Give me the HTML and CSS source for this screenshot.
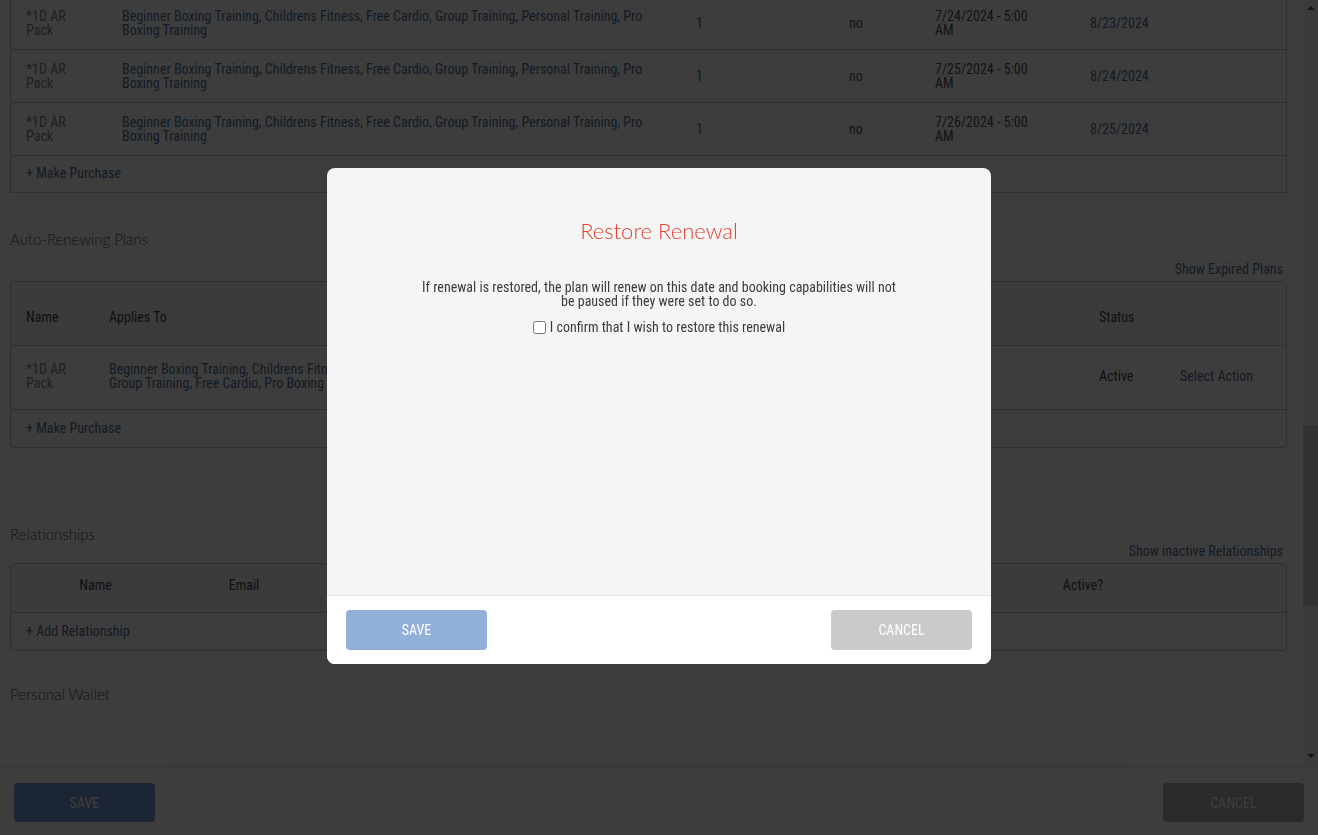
FILE: index.html
```html
<!DOCTYPE html>
<html lang="en">
<head>
<meta charset="utf-8">
<title>Member Plans</title>
<link rel="stylesheet" href="styles.css">
</head>
<body>
<div class="main">
  <div class="scroll">
    <div class="content">
      <div class="tbl tbl-plans">
        <div class="row plans-row">
          <div class="c-name">*1D AR Pack</div>
          <div class="c-apps">Beginner Boxing Training, Childrens Fitness, Free Cardio, Group Training, Personal Training, Pro Boxing Training</div>
          <div class="c-qty">1</div>
          <div class="c-no">no</div>
          <div class="c-date">7/24/2024 - 5:00 AM</div>
          <div class="c-exp">8/23/2024</div>
        </div>
        <div class="row plans-row">
          <div class="c-name">*1D AR Pack</div>
          <div class="c-apps">Beginner Boxing Training, Childrens Fitness, Free Cardio, Group Training, Personal Training, Pro Boxing Training</div>
          <div class="c-qty">1</div>
          <div class="c-no">no</div>
          <div class="c-date">7/25/2024 - 5:00 AM</div>
          <div class="c-exp">8/24/2024</div>
        </div>
        <div class="row plans-row">
          <div class="c-name">*1D AR Pack</div>
          <div class="c-apps">Beginner Boxing Training, Childrens Fitness, Free Cardio, Group Training, Personal Training, Pro Boxing Training</div>
          <div class="c-qty">1</div>
          <div class="c-no">no</div>
          <div class="c-date">7/26/2024 - 5:00 AM</div>
          <div class="c-exp">8/25/2024</div>
        </div>
        <div class="row add-row add-plans"><span class="link">+ Make Purchase</span></div>
      </div>

      <h3 class="sec-title sec-auto">Auto-Renewing Plans</h3>
      <div class="sec-link link-expired"><span class="link">Show Expired Plans</span></div>
      <div class="tbl tbl-ar">
        <div class="row ar-row ar-head">
          <div>Name</div>
          <div>Applies To</div>
          <div>Status</div>
          <div></div>
        </div>
        <div class="row ar-row ar-body">
          <div class="c-name">*1D AR Pack</div>
          <div class="c-apps ar-apps">Beginner Boxing Training, Childrens Fitness, Personal Training, Group Training, Free Cardio, Pro Boxing Training</div>
          <div class="c-status">Active</div>
          <div class="link">Select Action</div>
        </div>
        <div class="row add-row add-ar"><span class="link">+ Make Purchase</span></div>
      </div>

      <h3 class="sec-title sec-rel">Relationships</h3>
      <div class="sec-link link-rel"><span class="link">Show inactive Relationships</span></div>
      <div class="tbl tbl-rel">
        <div class="rel-head">
          <div>Name</div>
          <div>Email</div>
          <div></div>
          <div>Active?</div>
          <div></div>
        </div>
        <div class="row add-row add-rel"><span class="link">+ Add Relationship</span></div>
      </div>

      <h3 class="sec-title sec-wallet">Personal Wallet</h3>
      <div class="wallet-box"></div>
    </div>
    <div class="scrollbar">
      <div class="sb-btn"><span class="arrow-up"></span></div>
      <div class="sb-track"><div class="sb-thumb"></div></div>
      <div class="sb-btn sb-btn-bottom"><span class="arrow-down"></span></div>
    </div>
  </div>
  <div class="footer-bar">
    <button class="fbtn fbtn-save">SAVE</button>
    <button class="fbtn fbtn-cancel">CANCEL</button>
  </div>
</div>

<div class="overlay">
  <div class="modal">
    <div class="modal-body">
      <h2 class="modal-title">Restore Renewal</h2>
      <p class="modal-text">If renewal is restored, the plan will renew on this date and booking capabilities will not be paused if they were set to do so.</p>
      <label class="confirm"><input type="checkbox"> I confirm that I wish to restore this renewal</label>
    </div>
    <div class="modal-footer">
      <button class="mbtn mbtn-save">SAVE</button>
      <button class="mbtn mbtn-cancel">CANCEL</button>
    </div>
  </div>
</div>
</body>
</html>
```

FILE: styles.css
```css
* { box-sizing: border-box; }
html, body { margin: 0; height: 100%; }
body {
  font-family: "Liberation Sans Narrow", "Roboto Condensed", Roboto, sans-serif;
  font-size: 14px;
  line-height: 14px;
  color: #555;
  background: #fff;
  overflow: hidden;
}

.main { height: 835px; display: flex; flex-direction: column; }
.scroll { height: 767px; display: flex; overflow: hidden; }
.content { flex: 1; padding: 0 16px 0 10px; overflow: hidden; }

.link { color: #52719c; }

/* scrollbar */
.scrollbar { width: 15px; display: flex; flex-direction: column; background: #f3f3f3; }
.sb-btn { height: 15px; display: flex; align-items: center; justify-content: center; }
.sb-btn-bottom { margin-bottom: 4px; }
.sb-track { flex: 1; }
.sb-thumb { margin-top: 410px; height: 181px; background: #d2d2d2; }
.arrow-up { width: 0; height: 0; border-left: 4px solid transparent; border-right: 4px solid transparent; border-bottom: 4px solid #505050; }
.arrow-down { width: 0; height: 0; border-left: 4px solid transparent; border-right: 4px solid transparent; border-top: 4px solid #505050; }

/* tables */
.tbl { border: 1px solid #c6c6c6; border-radius: 4px; }
.row { display: grid; align-items: center; border-bottom: 1px solid #c6c6c6; padding-left: 15px; }
.row:last-child { border-bottom: none; }

.tbl-plans { margin-top: -4px; border-radius: 0; }
.plans-row { grid-template-columns: 96px 574px 153px 86px 155px 1fr; padding-top: 12px; padding-bottom: 12px; }
.c-name { width: 52px; color: #7a8597; }
.c-apps { max-width: 545px; color: #52719c; }
.c-qty { color: #52719c; }
.c-no { color: #555; }
.c-date { width: 106px; color: #555; }
.c-exp { color: #52719c; }

.add-row { display: block; }
.add-plans { padding-top: 10px; padding-bottom: 12px; }

.sec-title { margin: 0; font: 300 15px/20px Lato, sans-serif; color: #555; }
.sec-link { text-align: right; padding-right: 4px; line-height: 14px; }

.sec-auto { margin-top: 36px; }
.link-expired { margin-top: 13px; }
.tbl-ar { margin-top: 5px; }
.ar-row { grid-template-columns: 83px 990px 81px 1fr; }
.ar-head { padding-top: 28px; padding-bottom: 21px; background: #f4f4f4; color: #444; border-radius: 4px 4px 0 0; }
.ar-body { padding-top: 16px; padding-bottom: 19px; }
.ar-apps { max-width: 345px; }
.c-status { color: #444; }
.add-ar { padding-top: 11px; padding-bottom: 12px; }

.sec-rel { margin-top: 76px; }
.link-rel { margin-top: 0; }
.tbl-rel { margin-top: 5px; }
.rel-head {
  display: grid;
  grid-template-columns: 169px 128px 1fr 180px 113px;
  text-align: center;
  padding: 14px 0 20px;
  background: #f4f4f4;
  border-bottom: 1px solid #c6c6c6;
  border-radius: 4px 4px 0 0;
  color: #444;
}
.add-rel { padding-top: 11px; padding-bottom: 12px; }

.sec-wallet { margin-top: 33px; }
.wallet-box { margin: 37px 0 0 155px; width: 968px; height: 40px; background: #fbfbfb; border-top: 1px solid #ededed; }

/* page footer */
.footer-bar {
  height: 68px;
  border-top: 1px solid #e6e6e6;
  display: flex;
  justify-content: space-between;
  padding: 15px 14px 0;
  background: #fff;
}
.fbtn {
  width: 141px; height: 39px; border: none; border-radius: 4px;
  color: #fff; font-family: inherit; font-size: 14px;
}
.fbtn-save { background: #7499d3; }
.fbtn-cancel { background: #afafaf; }

/* overlay + modal */
.overlay {
  position: fixed; inset: 0;
  padding-bottom: 3px;
  background: rgba(0, 0, 0, 0.76);
  display: flex; align-items: center; justify-content: center;
}
.modal {
  width: 664px; height: 496px;
  background: #f5f5f5;
  border-radius: 8px;
  overflow: hidden;
  display: flex; flex-direction: column;
}
.modal-body { flex: 1; padding: 50px 60px 0; text-align: center; }
.modal-title { margin: 0; font: 300 22px/26px Lato, sans-serif; color: #e2402f; }
.modal-text { width: 478px; margin: 36px auto 0; color: #3c3c3c; }
.confirm { margin-top: 12px; display: flex; align-items: center; justify-content: center; gap: 4px; color: #3c3c3c; }
.confirm input { margin: 0; width: 13px; height: 13px; }

.modal-footer {
  height: 69px;
  background: #fff;
  border-top: 1px solid #e4e4e4;
  display: flex; justify-content: space-between;
  padding: 14px 19px 0;
}
.mbtn {
  width: 141px; height: 40px; border: none; border-radius: 4px;
  color: #fff; font-family: inherit; font-size: 14px;
}
.mbtn-save { background: #91afd9; }
.mbtn-cancel { background: #cacaca; }
```
